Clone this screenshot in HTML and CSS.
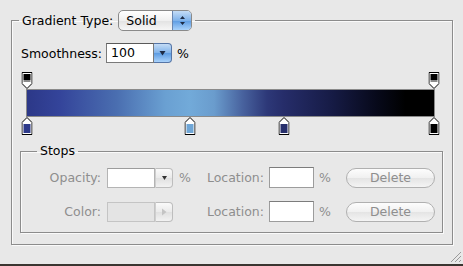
FILE: index.html
```html
<!DOCTYPE html>
<html lang="en">
<head>
  <meta charset="UTF-8">
  <title>Gradient Editor</title>
  <link rel="stylesheet" href="styles.css">
</head>
<body>
  <div class="window">
    <fieldset class="group">
      <legend class="group-title">
        <span>Gradient Type:</span>
        <span class="popup">
          <span class="popup-value">Solid</span>
          <span class="popup-arrows">
            <svg width="7" height="11" viewBox="0 0 7 11"><path d="M3.5 1 L6 4 H1 Z M3.5 10 L6 7 H1 Z" fill="#1c2a44"/></svg>
          </span>
        </span>
      </legend>

      <div class="row smooth">
        <span class="label">Smoothness:</span>
        <span class="combo">
          <span class="combo-field">100</span>
          <span class="combo-btn blue">
            <svg width="7" height="6" viewBox="0 0 7 6"><path d="M0.5 1 H6.5 L3.5 5.5 Z" fill="#1c2a44"/></svg>
          </span>
        </span>
        <span class="unit">%</span>
      </div>

      <div class="ramp">
        <div class="stop-row">
          <svg class="stop first" style="left: 0%" width="11" height="17" viewBox="0 0 11 17">
            <path d="M0.5 0.5 H10.5 V11.5 L5.5 16.5 L0.5 11.5 Z" fill="#fff" stroke="#000"/>
            <rect x="2" y="2" width="7" height="6" fill="#000"/>
            <rect x="2" y="8" width="7" height="2" fill="#8a8a8a"/>
          </svg>
          <svg class="stop last" style="left: 100%" width="11" height="17" viewBox="0 0 11 17">
            <path d="M0.5 0.5 H10.5 V11.5 L5.5 16.5 L0.5 11.5 Z" fill="#fff" stroke="#000"/>
            <rect x="2" y="2" width="7" height="6" fill="#000"/>
            <rect x="2" y="8" width="7" height="2" fill="#8a8a8a"/>
          </svg>
        </div>
        <div class="bar"></div>
        <div class="stop-row low">
          <svg class="stop first" style="left: 0%" width="11" height="18" viewBox="0 0 11 18">
            <path d="M5.5 0.5 L10.5 5.5 V17.5 H0.5 V5.5 Z" fill="#fff" stroke="#000"/>
            <rect x="2" y="7" width="7" height="9" fill="#2e3a8a"/>
          </svg>
          <svg class="stop" style="left: 40%" width="11" height="18" viewBox="0 0 11 18">
            <path d="M5.5 0.5 L10.5 5.5 V17.5 H0.5 V5.5 Z" fill="#fff" stroke="#000"/>
            <rect x="2" y="7" width="7" height="9" fill="#6fa6d6"/>
          </svg>
          <svg class="stop" style="left: 63%" width="11" height="18" viewBox="0 0 11 18">
            <path d="M5.5 0.5 L10.5 5.5 V17.5 H0.5 V5.5 Z" fill="#fff" stroke="#000"/>
            <rect x="2" y="7" width="7" height="9" fill="#272f6c"/>
          </svg>
          <svg class="stop last" style="left: 100%" width="11" height="18" viewBox="0 0 11 18">
            <path d="M5.5 0.5 L10.5 5.5 V17.5 H0.5 V5.5 Z" fill="#fff" stroke="#000"/>
            <rect x="2" y="7" width="7" height="9" fill="#000"/>
          </svg>
        </div>
      </div>

      <fieldset class="group stops">
        <legend class="stops-title">Stops</legend>

        <div class="row field-row">
          <span class="label dim wide">Opacity:</span>
          <span class="combo off">
            <span class="combo-field"></span>
            <span class="combo-btn grey">
              <svg width="7" height="6" viewBox="0 0 7 6"><path d="M1 1 H6 L3.5 5 Z" fill="#333"/></svg>
            </span>
          </span>
          <span class="unit dim">%</span>
          <span class="label dim loc">Location:</span>
          <span class="box"></span>
          <span class="unit dim">%</span>
          <button class="pill">Delete</button>
        </div>

        <div class="row field-row second">
          <span class="label dim wide">Color:</span>
          <span class="combo off">
            <span class="combo-field swatch"></span>
            <span class="combo-btn grey">
              <svg width="6" height="8" viewBox="0 0 6 8"><path d="M1 0.5 V7.5 L5.5 4 Z" fill="#c4c4c4"/></svg>
            </span>
          </span>
          <span class="unit"></span>
          <span class="label dim loc">Location:</span>
          <span class="box"></span>
          <span class="unit dim">%</span>
          <button class="pill">Delete</button>
        </div>
      </fieldset>
    </fieldset>

    <svg class="grip" width="12" height="12" viewBox="0 0 12 12">
      <path d="M1 11 L11 1 M5 11 L11 5 M9 11 L11 9" stroke="#9a9a9a" stroke-width="1"/>
    </svg>
  </div>
  <div class="edge"></div>
</body>
</html>
```

FILE: styles.css
```css
body {
  margin: 0;
  background: #e8e8e8;
  font-family: "DejaVu Sans", Verdana, sans-serif;
  font-size: 12.5px;
  color: #000;
  overflow: hidden;
}

.window {
  position: relative;
  height: 264px;
  padding: 10px 0 0 11px;
  box-sizing: border-box;
}

.edge {
  height: 2px;
  background: #3a3530;
}

.group {
  margin: 0;
  padding: 0 9px 11px 9px;
  width: 442px;
  box-sizing: border-box;
  border: 1px solid #8c8c8c;
  box-shadow: inset 1px 1px 0 #fafafa, 1px 1px 0 #fafafa;
  min-width: 0;
}

.group-title {
  display: flex;
  align-items: center;
  gap: 5px;
  margin-left: -2px;
  padding: 0 3px;
  height: 21px;
}

.popup {
  display: flex;
  width: 74px;
  height: 21px;
  box-sizing: border-box;
  border: 1px solid #8a8a8a;
  border-radius: 5px;
  overflow: hidden;
  background: linear-gradient(#ffffff, #f0f0f0 50%, #e2e2e2 51%, #f6f6f6);
}

.popup-value {
  flex: 1;
  padding-left: 7px;
  line-height: 19px;
}

.popup-arrows {
  width: 18px;
  display: flex;
  align-items: center;
  justify-content: center;
  border-left: 1px solid #6a86b0;
  background: linear-gradient(#c4dcf6, #7fb2ea 50%, #5c9be2 51%, #a9d2fb);
}

.row {
  display: flex;
  align-items: center;
}

.smooth {
  margin-top: 12px;
  height: 20px;
}

.label {
  white-space: nowrap;
}

.smooth .label {
  width: 85px;
  flex: none;
}

.combo {
  display: flex;
  height: 20px;
}

.combo-field {
  width: 48px;
  box-sizing: border-box;
  border: 1px solid #7a7a7a;
  border-top-color: #5a5a5a;
  background: #fff;
  padding-left: 4px;
  line-height: 18px;
}

.combo-btn {
  width: 18px;
  box-sizing: border-box;
  display: flex;
  align-items: center;
  justify-content: center;
  border-radius: 0 4px 4px 0;
}

.combo-btn.blue {
  border: 1px solid #5575a6;
  border-left: none;
  background: linear-gradient(#c4dcf6, #7fb2ea 50%, #5c9be2 51%, #a9d2fb);
}

.combo-btn.grey {
  border: 1px solid #bdbdbd;
  border-left: 1px solid #cfcfcf;
  background: linear-gradient(#fafafa, #eaeaea 50%, #e0e0e0 51%, #f2f2f2);
}

.unit {
  margin-left: 5px;
}

.ramp {
  position: relative;
  width: 409px;
  margin: 9px 0 0 5px;
}

.stop-row {
  position: relative;
  height: 17px;
}

.stop-row.low {
  height: 18px;
}

.stop {
  position: absolute;
  top: 0;
  transform: translateX(-50%);
}

.stop.first {
  margin-left: 1px;
}

.stop.last {
  margin-left: -1px;
}

.bar {
  height: 28px;
  box-sizing: border-box;
  border: 1px solid #8a8a8a;
  background: linear-gradient(90deg,
    #2c3888 0%,
    #34449a 8%,
    #4a6eb0 22%,
    #6aa0d2 34%,
    #72aad9 40%,
    #6a9ccd 46%,
    #48629e 53%,
    #2d3878 59%,
    #262d6a 63%,
    #161b45 75%,
    #07091a 86%,
    #000 93%,
    #000 100%);
}

.stops {
  width: 423px;
  margin: 8px 0 0 -1px;
  padding: 0 0 10px 0;
}

.stops-title {
  margin-left: 16px;
  padding: 0 3px;
  height: 16px;
  line-height: 16px;
}

.field-row {
  margin-top: 8px;
  height: 21px;
}

.field-row.second {
  margin-top: 13px;
}

.dim {
  color: #8e8e8e;
}

.label.wide {
  width: 80px;
  text-align: right;
  margin-right: 6px;
}

.combo.off .combo-field {
  border: 1px solid #b4b4b4;
  border-top-color: #9c9c9c;
}

.combo.off .combo-field.swatch {
  background: #e4e4e4;
  border-color: #c4c4c4;
}

.field-row .unit {
  width: 12px;
  margin-left: 6px;
}

.label.loc {
  width: 73px;
  text-align: right;
  margin-right: 5px;
}

.box {
  width: 45px;
  height: 21px;
  box-sizing: border-box;
  border: 1px solid #9c9c9c;
  border-top-color: #7c7c7c;
  background: #fff;
}

.field-row .box + .unit {
  margin-left: 5px;
  width: 27px;
}

.pill {
  width: 89px;
  height: 20px;
  padding: 0;
  font: inherit;
  color: #8e8e8e;
  border: 1px solid #b0b0b0;
  border-radius: 10px;
  background: linear-gradient(#fdfdfd, #f0f0f0 50%, #e4e4e4 51%, #f4f4f4);
}

.grip {
  position: absolute;
  right: 1px;
  bottom: 1px;
}
```
